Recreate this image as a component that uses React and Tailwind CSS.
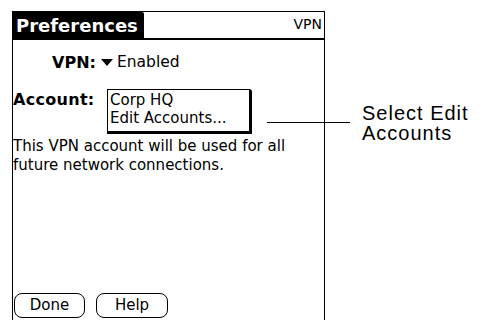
export default function App() {
  const palm = { fontFamily: '"DejaVu Sans", "Liberation Sans", sans-serif' };
  return (
    <div className="relative h-[320px] w-[487px] overflow-hidden bg-white">
      <div
        className="ml-[12px] mt-[11px] flex h-[309px] w-[313px] flex-col border-x border-t border-black text-black"
        style={palm}
      >
        <div className="flex h-[28px] items-stretch justify-between border-b-2 border-black">
          <div className="flex w-[131px] items-center rounded-tr-[2px] bg-black pl-[3px] pt-[1px] text-[18px] font-bold leading-none text-white">
            Preferences
          </div>
          <div className="pr-[2px] pt-[5px] text-[14px] leading-none">VPN</div>
        </div>

        <div className="mt-[14px] flex h-[18px] items-center">
          <span className="w-[83px] text-right text-[16px] font-bold">VPN:</span>
          <svg width="12" height="8" viewBox="0 0 12 8" className="ml-[5px]">
            <path d="M0 0 H12 L6 7 Z" fill="black" />
          </svg>
          <span className="ml-[4px] text-[15.5px]">Enabled</span>
        </div>

        <div className="mt-[17px] flex items-start">
          <span className="w-[94px] pt-[2px] text-[16px] font-bold leading-[18px] tracking-[0.3px]">Account:</span>
          <div className="flex h-[45px] w-[145px] flex-col rounded-tr-[3px] border border-r-[3px] border-b-[3px] border-black px-[2px] pt-[1px] text-[15px] leading-[18px]">
            <span>Corp HQ</span>
            <span>Edit Accounts...</span>
          </div>
        </div>

        <p className="mt-[3px] text-[15px] leading-[19px]">
          This VPN account will be used for all
          <br />
          future network connections.
        </p>

        <div className="mt-auto mb-[2px] flex gap-[11px] pl-[1px]">
          <button className="h-[25px] w-[71px] rounded-[8px] border border-black text-[15px] leading-none">
            Done
          </button>
          <button className="h-[25px] w-[72px] rounded-[8px] border border-black text-[15px] leading-none">
            Help
          </button>
        </div>
      </div>

      <div className="absolute left-[267px] top-[122px] h-px w-[83px] bg-black" />
      <div
        className="absolute left-[362px] top-[103px] text-[20px] leading-[20px] tracking-[1px] text-black"
        style={{ fontFamily: '"Liberation Sans", Arial, sans-serif' }}
      >
        Select Edit
        <br />
        Accounts
      </div>
    </div>
  );
}
